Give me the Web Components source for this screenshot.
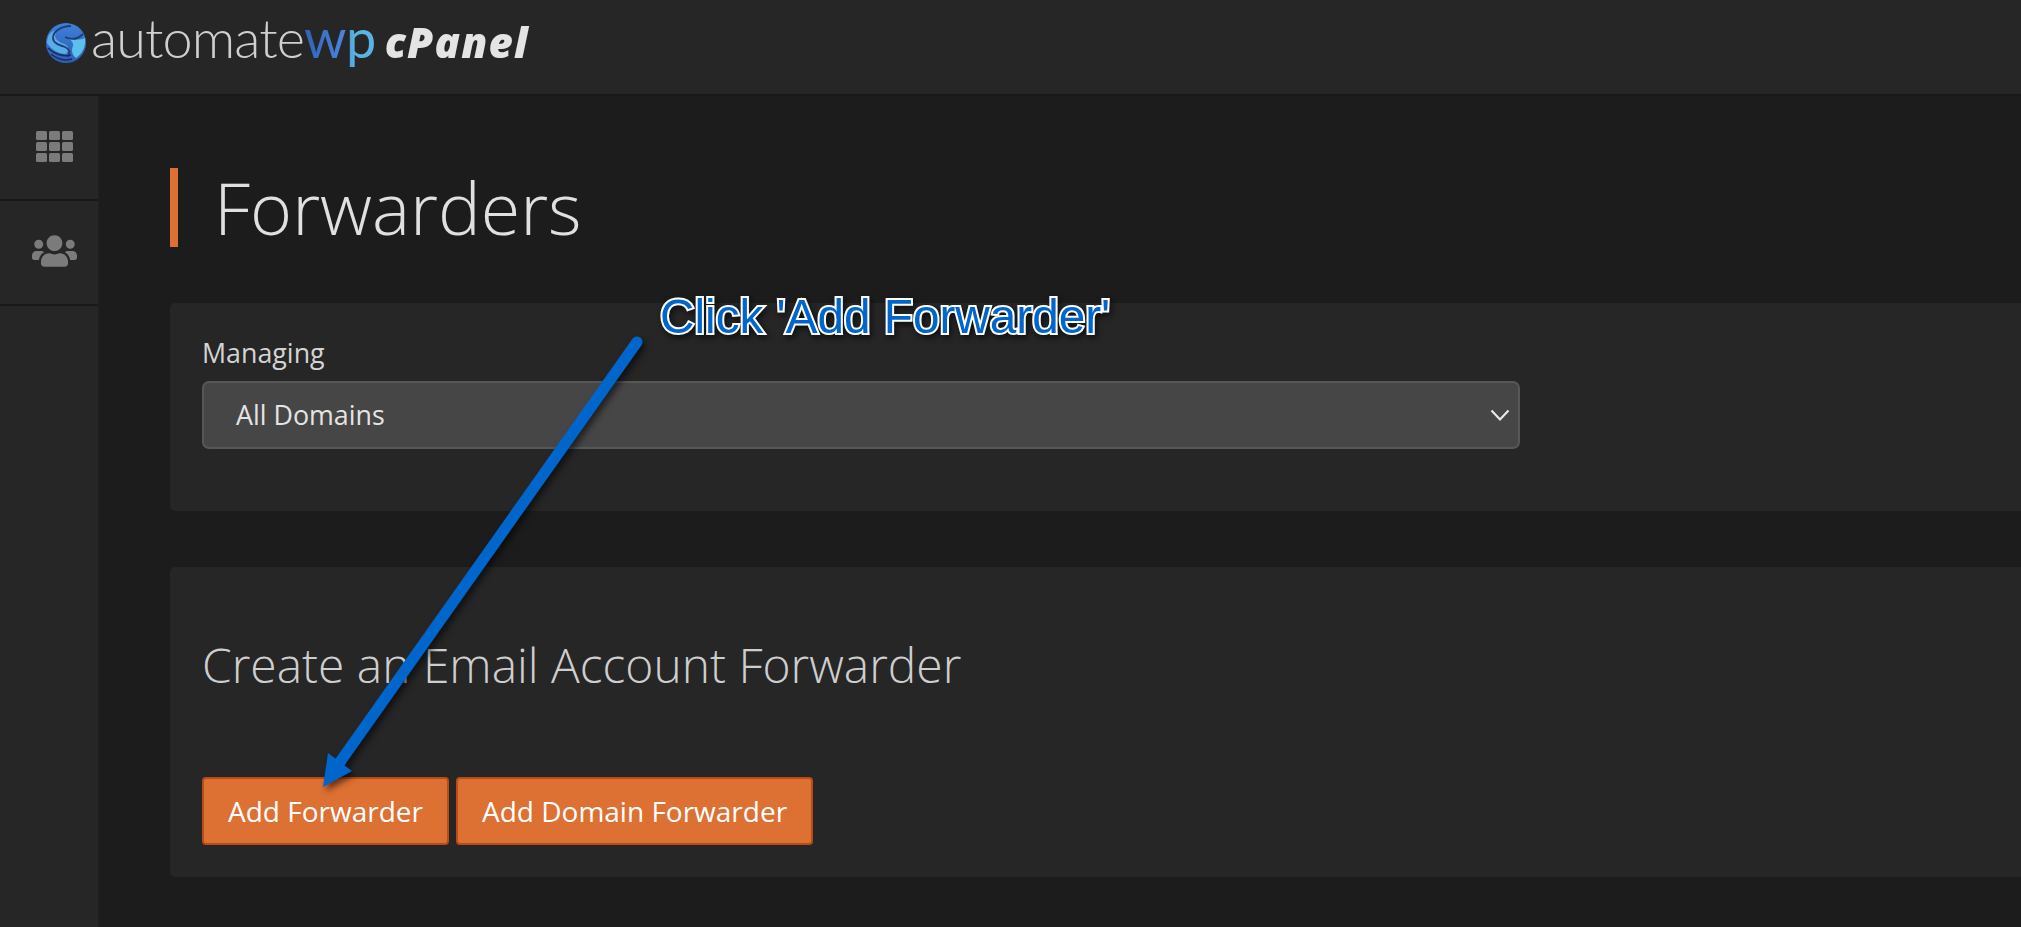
<!DOCTYPE html>
<html lang="en"><head><meta charset="utf-8"><title>Forwarders</title>
<style>
html,body{margin:0;height:100%;background:#1c1c1c;overflow:hidden}
body{font-family:"Open Sans","Noto Sans",sans-serif;color:#e0e0e0}
</style></head><body>
<app-shell>
  <app-header slot="header"><brand-logo></brand-logo></app-header>
  <side-nav slot="nav">
    <nav-item><svg viewBox="0 0 37 31" width="37" height="31" fill="#7b7b7b"><rect width="11" height="9" rx="1.5"/><rect x="13" width="11" height="9" rx="1.5"/><rect x="26" width="11" height="9" rx="1.5"/><rect y="11" width="11" height="9" rx="1.5"/><rect x="13" y="11" width="11" height="9" rx="1.5"/><rect x="26" y="11" width="11" height="9" rx="1.5"/><rect y="22" width="11" height="9" rx="1.5"/><rect x="13" y="22" width="11" height="9" rx="1.5"/><rect x="26" y="22" width="11" height="9" rx="1.5"/></svg></nav-item>
    <nav-item><svg viewBox="0 0 640 512" width="45" height="36" fill="#7b7b7b"><path d="M96 224c35.3 0 64-28.7 64-64s-28.7-64-64-64-64 28.7-64 64 28.7 64 64 64zm448 0c35.3 0 64-28.7 64-64s-28.7-64-64-64-64 28.7-64 64 28.7 64 64 64zm32 32h-64c-17.6 0-33.5 7.1-45.1 18.6 40.3 22.1 68.9 62 75.1 109.4h66c17.7 0 32-14.3 32-32v-32c0-35.3-28.7-64-64-64zm-256 0c61.9 0 112-50.1 112-112S381.9 32 320 32 208 82.1 208 144s50.1 112 112 112zm76.8 32h-8.3c-20.8 10-43.9 16-68.5 16s-47.6-6-68.5-16h-8.3C179.6 288 128 339.6 128 403.2V432c0 26.5 21.5 48 48 48h288c26.5 0 48-21.5 48-48v-28.8c0-63.6-51.6-115.2-115.2-115.2zm-223.7-13.4C161.5 263.1 145.6 256 128 256H64c-35.3 0-64 28.7-64 64v32c0 17.7 14.3 32 32 32h65.9c6.3-47.4 34.9-87.3 75.2-109.4z"/></svg></nav-item>
  </side-nav>
  <page-title>Forwarders</page-title>
  <ui-panel style="height:208px;margin-top:56px">
    <ui-select label="Managing" value="All Domains"></ui-select>
  </ui-panel>
  <ui-panel style="height:310px;margin-top:56px">
    <section-heading>Create an Email Account Forwarder</section-heading>
    <button-row>
      <ui-button>Add Forwarder</ui-button>
      <ui-button>Add Domain Forwarder</ui-button>
    </button-row>
  </ui-panel>
  <call-out slot="overlay">Click 'Add Forwarder'</call-out>
</app-shell>
<script>
function def(name, css, html){
  customElements.define(name, class extends HTMLElement{
    constructor(){super();this.attachShadow({mode:"open"}).innerHTML="<style>"+css+"</style>"+html;}
  });
}
def("app-shell",`
  :host{display:grid;grid-template-columns:99px 1fr;grid-template-rows:96px 1fr;height:927px;position:relative;overflow:hidden}
  ::slotted(app-header){grid-column:1/3}
  .main{padding:72px 0 0 71px;min-width:0}
`,`<slot name="header"></slot><slot name="nav"></slot><div class="main"><slot></slot></div><slot name="overlay"></slot>`);
def("app-header",`:host{display:flex;align-items:center;height:94px;background:#262626;border-bottom:2px solid #191919;padding-left:46px}`,`<slot></slot>`);
def("brand-logo",`
  :host{display:flex;align-items:baseline;height:70px;position:relative;top:-9px;color:#d4d4d4;filter:blur(.6px);white-space:nowrap}
  svg{align-self:center;margin-right:5px;flex:none;position:relative;top:5px}
  .a{font:300 54px/70px Lato,sans-serif;letter-spacing:-.9px;color:#cfcfcf}
  .w{font:400 54px/70px Lato,sans-serif;letter-spacing:-.5px;background:linear-gradient(90deg,#2f62b8,#4a84de 55%,#58b4e2 70%);-webkit-background-clip:text;background-clip:text;color:transparent}
  .c{font:italic 800 42px/70px "Open Sans",sans-serif;color:#e4e4e4;margin-left:9px;letter-spacing:1.2px}
`,`<svg width="40" height="40" viewBox="0 0 40 40"><defs><linearGradient id="g" x1="0" y1="0" x2="0" y2="1"><stop offset="0" stop-color="#3f7fd8"/><stop offset="1" stop-color="#2b5fb8"/></linearGradient></defs><circle cx="20" cy="20" r="20" fill="url(#g)"/><path d="M1 20C1 12 6 7 12 7c-3 3-4 7-1 10 3 3 6 3 9 5 3 2 3 6 0 9C12 31 6 27 1 20Z" fill="#57aee6"/><path d="M39 15c1 8-2 15-9 20-4-3-5-8-3-12 1-3-2-6-5-8 6 2 12 2 17 0Z" fill="#5cc0ea"/><path d="M25 3C16 3 7 8 7 15c0 5 6 7 12 9 4 2 6 5 3 10" fill="none" stroke="#1f3e78" stroke-width="1.8"/><path d="M2 25c6 6 15 9 23 7M5 31c6 5 14 7 21 5" fill="none" stroke="#1b2d55" stroke-width="1.5"/><path d="M19 14c6 3 12 3 18-3" fill="none" stroke="#1f3e78" stroke-width="1.8"/></svg><span class="a">automate</span><span class="w">wp</span><span class="c">cPanel</span>`);
def("side-nav",`:host{display:flex;flex-direction:column;background:#262626;border-right:1px solid #202020;box-sizing:border-box}`,`<slot></slot>`);
def("nav-item",`:host{display:flex;justify-content:center;align-items:center;height:100px;border-bottom:2px solid #191919;padding:0 0 3px 10px}`,`<slot></slot>`);
def("page-title",`
  :host{display:block;border-left:8px solid #dd7033;padding-left:36px;height:79px;font:300 71.8px/79px "Open Sans",sans-serif;color:#e0e0e0}
`,`<slot></slot>`);
def("ui-panel",`:host{display:block;background:#262626;border-radius:5px 0 0 5px;padding:0 0 0 32px;box-sizing:border-box;overflow:hidden}`,`<slot></slot>`);
def("ui-select",`
  :host{display:block;width:1318px;padding-top:31px}
  label{display:block;font:400 26.8px/38px "Open Sans",sans-serif;color:#d4d4d4;margin-bottom:9px}
  .box{display:flex;align-items:center;justify-content:space-between;height:68px;box-sizing:border-box;background:#464646;border:2px solid #575757;border-radius:7px;padding:0 8px 0 32px;font:400 26.8px/38px "Open Sans",sans-serif;color:#e4e4e4}
`,`<label></label><div class="box"><span class="v"></span><svg width="20" height="13" viewBox="0 0 20 13" fill="none" stroke="#e8e8e8" stroke-width="2.2"><path d="M1.5 1.5 10 10.5 18.5 1.5"/></svg></div>`);
def("section-heading",`:host{display:block;font:300 47.9px/68px "Open Sans",sans-serif;color:#cecece;margin-top:64px}`,`<slot></slot>`);
def("button-row",`:host{display:flex;gap:7px;margin-top:78px}`,`<slot></slot>`);
def("ui-button",`:host{display:block;box-sizing:border-box;height:68px;background:#dd7033;border:2px solid #b94b18;border-radius:4px;padding:0 24px;font:400 28px/64px "Open Sans",sans-serif;color:#fff;white-space:nowrap}`,`<slot></slot>`);
def("call-out",`
  :host{position:absolute;left:0;top:0;width:2021px;height:927px;pointer-events:none;display:block}
  svg{position:absolute;left:0;top:0;filter:drop-shadow(3px 4px 3px rgba(0,0,0,.55))}
  .t{position:absolute;left:660px;top:289px;font:400 47.7px/56px "Liberation Sans",Arial,sans-serif;color:#0066cc;-webkit-text-stroke:4px #fff;paint-order:stroke fill;white-space:nowrap;filter:drop-shadow(2px 3px 3px rgba(0,0,0,.6))}
`,`<svg width="2021" height="927"><path d="M637 342 340 762" stroke="#0066cc" stroke-width="11" stroke-linecap="round" fill="none"/><path d="M323 787 328 753 352 771Z" fill="#0066cc"/></svg><div class="t"><slot></slot></div>`);
document.querySelectorAll("ui-select").forEach(e=>{
  e.shadowRoot.querySelector("label").textContent=e.getAttribute("label");
  e.shadowRoot.querySelector(".v").textContent=e.getAttribute("value");
});
</script>
</body></html>
